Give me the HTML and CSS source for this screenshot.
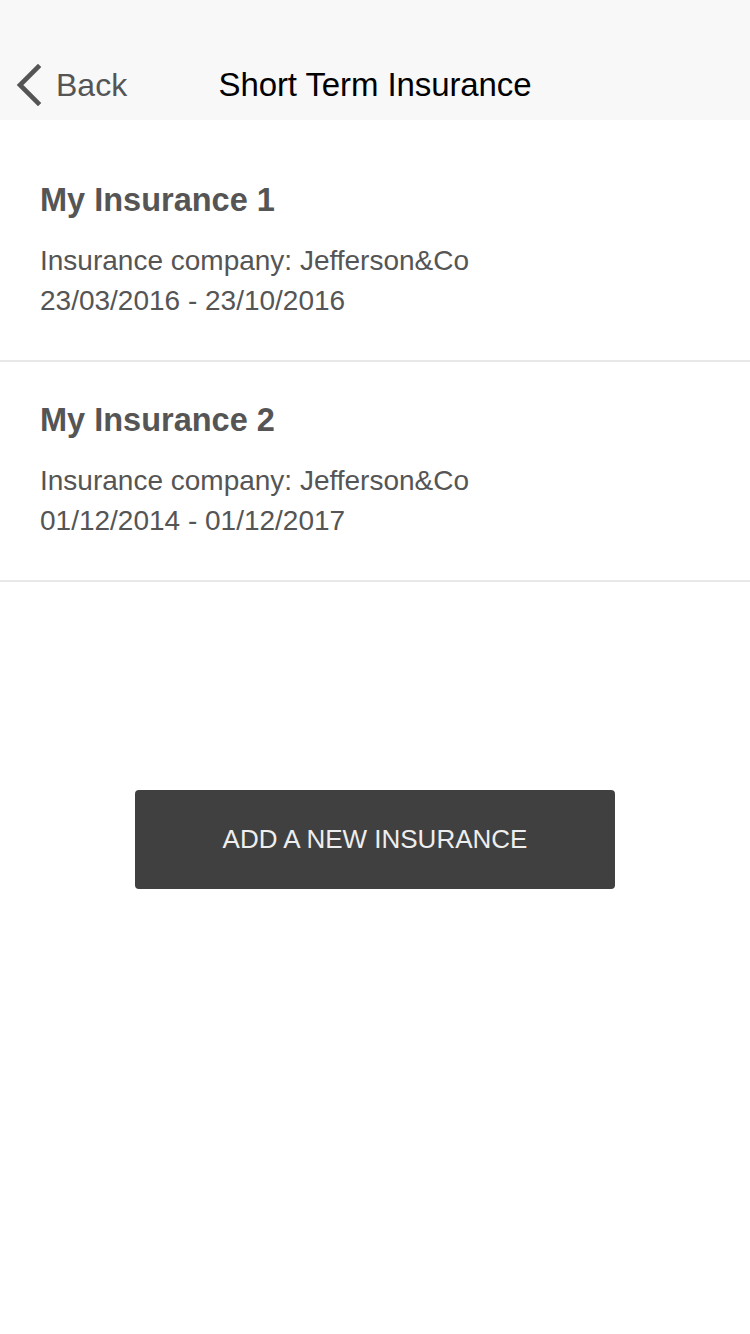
FILE: index.html
```html
<!DOCTYPE html>
<html lang="en">
<head>
<meta charset="utf-8">
<title>Short Term Insurance</title>
<link rel="stylesheet" href="styles.css">
</head>
<body>
<header class="navbar">
  <a class="back" href="#">
    <svg class="chevron" width="28" height="42" viewBox="0 0 28 42" aria-hidden="true">
      <path d="M23 3 L5 21 L23 39" fill="none" stroke="#555" stroke-width="4.6" stroke-linecap="square" stroke-linejoin="miter"/>
    </svg>
    <span class="back-label">Back</span>
  </a>
  <h1 class="nav-title">Short Term Insurance</h1>
  <span class="nav-spacer"></span>
</header>
<main class="content">
  <ul class="list">
    <li class="item">
      <h2 class="item-title">My Insurance 1</h2>
      <p class="item-meta">Insurance company: Jefferson&amp;Co<br>23/03/2016 - 23/10/2016</p>
    </li>
    <li class="item">
      <h2 class="item-title">My Insurance 2</h2>
      <p class="item-meta">Insurance company: Jefferson&amp;Co<br>01/12/2014 - 01/12/2017</p>
    </li>
  </ul>
  <div class="actions">
    <button class="add-btn" type="button">ADD A NEW INSURANCE</button>
  </div>
</main>
</body>
</html>
```
FILE: styles.css
```css
* { box-sizing: border-box; }
html, body {
  margin: 0;
  padding: 0;
  background: #ffffff;
  font-family: "Liberation Sans", Arial, Helvetica, sans-serif;
}
.navbar {
  height: 120px;
  padding-top: 65px;
  background: #f8f8f8;
  display: grid;
  grid-template-columns: 1fr auto 1fr;
  align-items: start;
}
.back {
  display: flex;
  align-items: center;
  text-decoration: none;
  color: #555555;
  padding-left: 15px;
  height: 40px;
}
.chevron {
  display: block;
  margin-top: -1px;
  margin-right: 13px;
}
.back-label {
  font-size: 32px;
  line-height: 40px;
}
.nav-title {
  margin: 0;
  font-size: 33px;
  line-height: 40px;
  font-weight: normal;
  color: #000000;
  letter-spacing: -0.1px;
}
.list {
  list-style: none;
  margin: 0;
  padding: 22px 0 0 0;
}
.item {
  padding: 38px 40px 39px 40px;
  border-bottom: 2px solid #e8e8e8;
}
.item-title {
  margin: 0;
  font-size: 32.5px;
  line-height: 40px;
  font-weight: bold;
  color: #555555;
}
.item-meta {
  margin: 21px 0 0 0;
  font-size: 28px;
  line-height: 40px;
  color: #555555;
}
.actions {
  display: flex;
  justify-content: center;
  padding-top: 208px;
}
.add-btn {
  width: 480px;
  height: 99px;
  border: none;
  border-radius: 4px;
  background: #404040;
  color: #eeeeee;
  font-family: "Liberation Sans", Arial, Helvetica, sans-serif;
  font-size: 26px;
  cursor: pointer;
}
```
